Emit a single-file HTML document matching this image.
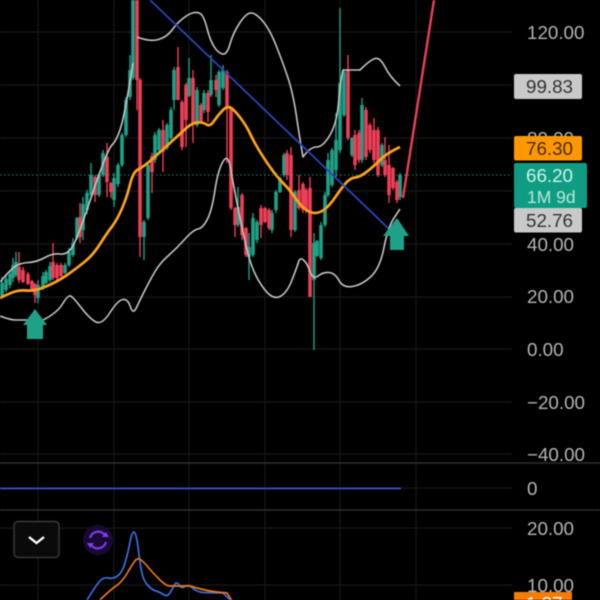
<!DOCTYPE html>
<html>
<head>
<meta charset="utf-8">
<style>
html,body{margin:0;padding:0;background:#000;width:600px;height:600px;overflow:hidden}
svg{display:block;position:absolute;left:0;top:0;filter:blur(.6px)}
text{font-family:"Liberation Sans",sans-serif;font-size:18.8px}
</style>
</head>
<body>
<svg width="600" height="600" viewBox="0 0 600 600" xmlns="http://www.w3.org/2000/svg">
<rect width="600" height="600" fill="#000"/>
<!-- grid -->
<path d="M38 0V600M114 0V600M189 0V600M265 0V600M340 0V600M416 0V600" stroke="#181818" stroke-width="1.2" fill="none"/>
<path d="M0 32H512M0 85H512M0 138H512M0 191H512M0 244H512M0 297H512M0 349H512M0 402H512M0 454H512M0 488H512M0 528H512M0 585H512" stroke="#181818" stroke-width="1.2" fill="none"/>
<path d="M0 463H600M0 510H600" stroke="#2e2e2e" stroke-width="1.5" fill="none"/>
<!-- last price line -->
<path d="M0 175H512" stroke="#1a8c74" stroke-width="1" stroke-dasharray="1.5 2.5" fill="none"/>
<!-- green wicks -->
<path fill="none" stroke="#1fa187" stroke-width="1.4" d="M2 277V297M6 274V292M10 270V288M13 258V282M16 252V277M38 280V303M43 272V290M46 270V284M50 262V282M65 263V274M69 248V267M73 238V257M77 217V240M83 197V240M87 190V214M91 163V200M99 173V197M103 150V177M114 173V207M118 163V187M122 133V167M126 97V137M130 55V100M133 0V80M144 220V260M148 163V220M155 132V163M159 128V153M167 123V150M171 107V140M174 67V110M189 58V97M197 87V127M204 90V113M211 55V97M219 70V107M223 65V90M238 187V227M249 233V280M253 213V257M257 220V243M272 210V233M276 190V213M280 177V193M284 153V177M295 190V232M314 233V350M317 240V257M321 222V260M325 192V227M328 153V197M332 148V187M336 113V177M340 8V153M344 70V117M352 137V157M362 98V163M382 143V167M400 173V200"/>
<!-- green bodies -->
<path fill="none" stroke="#1fa187" stroke-width="3.6" d="M2 283V296M6 279V290M10 274V285M13 265V278M16 262V275M38 285V298M43 276V288M46 272V283M50 266V280M65 265V273M69 252V265M73 243V255M77 218V238M83 204V230M87 193V210M91 175V195M99 175V195M103 153V175M114 178V200M118 165V184M122 135V165M126 100V135M130 70V97M133 0V78M144 222V237M148 165V218M155 135V160M159 130V150M167 125V148M171 110V138M174 70V100M189 78V96M197 90V125M204 93V110M211 80V95M219 72V105M223 70V88M238 207V225M249 247V257M253 218V255M257 222V240M272 213V230M276 192V210M280 178V192M284 155V175M295 192V230M314 243V280M317 241V256M321 225V258M325 195V225M328 160V195M332 150V185M336 140V170M340 83V150M344 72V115M352 138V155M362 105V160M382 145V165M400 175V197"/>
<!-- red wicks -->
<path fill="none" stroke="#ee3f58" stroke-width="1.4" d="M19 252V283M23 267V283M28 272V285M32 280V292M35 283V303M53 243V280M57 263V280M61 263V277M80 203V243M95 175V202M107 143V197M111 182V198M137 0V110M140 78V257M152 153V193M163 120V172M178 47V100M182 100V150M186 83V147M193 70V143M201 103V123M208 90V122M216 75V97M227 70V163M231 107V210M235 207V237M242 193V240M246 227V257M261 205V238M265 207V223M269 208V230M287 150V180M291 147V237M299 175V210M303 182V213M306 188V213M310 177V297M348 55V140M355 130V170M359 130V163M366 107V160M370 123V153M374 118V163M378 127V177M385 137V177M389 145V203M393 167V190M397 180V203"/>
<!-- red bodies -->
<path fill="none" stroke="#ee3f58" stroke-width="3.6" d="M19 267V280M23 270V282M28 274V284M32 281V291M35 284V295M53 262V278M57 265V278M61 265V276M80 217V237M95 177V195M107 157V182M111 183V192M137 0V80M140 80V237M152 156V172M163 130V152M178 67V100M182 102V147M186 85V120M193 78V123M201 105V122M208 93V112M216 80V90M227 72V107M231 108V208M235 208V225M242 195V235M246 228V255M261 208V225M265 208V222M269 210V228M287 153V175M291 155V230M299 190V208M303 184V210M306 190V210M310 188V297M348 70V138M355 135V165M359 133V160M366 110V157M370 125V150M374 130V160M378 130V175M385 160V175M389 165V195M393 168V188M397 182V200"/>
<!-- Bollinger bands -->
<g fill="none" stroke="#c4c4c4" stroke-width="1.6" stroke-linejoin="round">
<path d="M0 282Q10 270 15 266.500Q20 263 28.500 262.500Q37 262 45 257.500Q53 253 60 254Q67 255 72 247.500Q77 240 92 195Q107 150 112 145Q117 140 121 126.500Q125 113 133 63M137 37Q150 42 158.500 39.500Q167 37 172 30Q177 23 183.500 18Q190 13 195 12.500Q200 12 202.500 16Q205 20 207.500 30Q210 40 214 46.500Q218 53 222.500 54Q227 55 230 44Q233 33 240 22.500Q247 12 252 13Q257 14 263.500 22Q270 30 276.500 46.500Q283 63 288 78Q293 93 296.500 116.500Q300 140 303 157Q310 147 316.500 147Q323 147 330 135Q337 123 338.500 103Q340 83 343 70L360 70Q370 60 375 58.500Q380 57 385 67Q390 77 400 86"/>
<path d="M0 316Q10 320 16.500 320L43 320Q57 313 62.500 304Q68 295 70.500 296Q73 297 81.500 308Q90 319 96 322Q102 325 110 312.500Q118 300 123 299.500Q128 299 130.500 307Q133 315 136.500 307.500Q140 300 145 290Q150 280 155 271.500Q160 263 168.500 255.500Q177 248 185 239Q193 230 198 229Q203 228 207.500 219Q212 210 215 190Q218 170 223 161.500Q228 153 230.500 168Q233 183 240 218Q247 253 252 266.500Q257 280 265 290Q273 300 280 296.500Q287 293 292 280Q297 267 298.500 262Q300 257 303.500 260Q307 263 310 271.500Q313 280 318 276Q323 272 329 272.500Q335 273 339 280.500Q343 288 352.500 286.500Q362 285 371 276.500Q380 268 384 247.500Q388 227 394 218Q400 209 400 209"/>
</g>
<!-- MA -->
<path fill="none" stroke="#fba31c" stroke-width="2.7" stroke-linejoin="round" d="M0 298Q10 293 15 291.500Q20 290 26 290.500Q32 291 37.500 289.500Q43 288 51.500 284Q60 280 68.500 274Q77 268 85 261.500Q93 255 100 244Q107 233 112 226.500Q117 220 122 208.500Q127 197 130 184.500Q133 172 138 169.500Q143 167 150 161Q157 155 163.500 149Q170 143 176 137.500Q182 132 187 127.500Q192 123 197.500 122.500Q203 122 206.500 124.500Q210 127 214 121Q218 115 223 110Q228 105 232.500 109Q237 113 242 120Q247 127 250 133.500Q253 140 258 148.500Q263 157 270 167Q277 177 283.500 183.500Q290 190 295 197.500Q300 205 305 209Q310 213 315 213Q320 213 325 209Q330 205 335 197.500Q340 190 345 184Q350 178 355 177.500Q360 177 366.500 172Q373 167 380 160Q387 153 400 147"/>
<!-- trend lines -->
<path d="M150 0L388 228" stroke="#2b45b8" stroke-width="1.8" fill="none"/>
<path d="M403 198L434 0" stroke="#ee3f58" stroke-width="2.4" fill="none"/>
<!-- arrows -->
<path d="M35 309L47 325H43V339H27V325H23Z" fill="#1fa187"/>
<path d="M397 218L409 236H404V250H390V236H383Z" fill="#1fa187"/>
<!-- flat line panel -->
<path d="M0 488.5H401" stroke="#3553c8" stroke-width="1.8" fill="none"/>
<!-- lower indicator -->
<path fill="none" stroke="#3a6fe0" stroke-width="1.7" stroke-linejoin="round" d="M87 600Q95 587 99 582Q103 577 108 578Q113 579 117.500 576Q122 573 125 563Q128 553 130 542Q132 532 134 532Q136 532 138 547Q140 563 141.500 571Q143 580 147.500 585Q152 590 156 591Q160 592 163.500 594.500Q167 597 169.500 593.500Q172 590 173.500 586.500Q175 583 176.500 583Q178 583 180 586Q182 589 185 586.500Q188 584 192.500 588Q197 592 203.500 592.500L223 593L230 600"/>
<path fill="none" stroke="#e8761e" stroke-width="1.7" stroke-linejoin="round" d="M100 600Q110 590 116 586Q122 582 127 573.500Q132 565 134.500 561.500Q137 558 139.500 559Q142 560 147.500 566.500Q153 573 159 579Q165 585 169 586L190 586Q207 591 217 592L227 593L232 601"/>
<!-- chevron button -->
<rect x="14" y="521.5" width="45" height="36" rx="4" fill="#0a0a0a" stroke="#383838" stroke-width="1.5"/>
<path d="M29 537L36.500 543L44 537" fill="none" stroke="#fff" stroke-width="2.4"/>
<!-- purple icon -->
<circle cx="98" cy="540" r="15" fill="#190a33"/>
<path d="M90 538A8.500 8.500 0 0 1 105 535M106 542A8.500 8.500 0 0 1 91 545" fill="none" stroke="#7a3cf0" stroke-width="2.200"/>
<path d="M102 537L109 537L106 532ZM94 543L87 543L90 548Z" fill="#7a3cf0"/>
<!-- axis labels -->
<g fill="#b4b4b4">
<text x="527" y="39">120.00</text>
<text x="527" y="145">80.00</text>
<text x="527" y="251">40.00</text>
<text x="527" y="303">20.00</text>
<text x="527" y="356">0.00</text>
<text x="527" y="409">−20.00</text>
<text x="527" y="461">−40.00</text>
<text x="527" y="495">0</text>
<text x="527" y="535">20.00</text>
<text x="527" y="592">10.00</text>
</g>
<!-- badges -->
<rect x="514" y="74" width="68" height="25" rx="2" fill="#c9c9c9"/>
<text x="526" y="93" fill="#333">99.83</text>
<rect x="514" y="136" width="68" height="24.500" rx="2" fill="#ff9800"/>
<text x="526" y="155" fill="#4a2a05">76.30</text>
<rect x="514" y="163" width="73" height="45" rx="2" fill="#109c83"/>
<text x="526" y="182" fill="#cdf2e8">66.20</text>
<text x="527" y="203" fill="#b3ead9" style="font-size:17.500px">1M 9d</text>
<rect x="514" y="208" width="68" height="24.500" rx="2" fill="#c9c9c9"/>
<text x="526" y="227" fill="#333">52.76</text>
<rect x="514" y="592" width="58" height="10" fill="#f57c00"/>
<text x="526" y="610" fill="#fff">1.87</text>
</svg>
</body>
</html>
